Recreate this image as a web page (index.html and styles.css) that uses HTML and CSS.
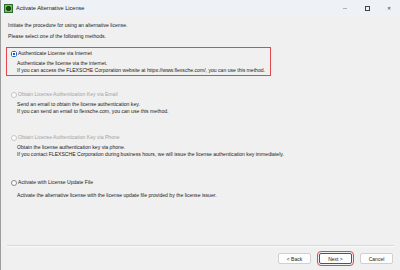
FILE: index.html
```html
<!DOCTYPE html>
<html lang="en">
<head>
  <meta charset="UTF-8" />
  <title>Activate Alternative License</title>
  <link rel="stylesheet" href="styles.css">
</head>
<body>

  <div class="window">
    <!-- Title bar -->
    <div class="titlebar">
      <svg class="app-icon" width="9" height="9" viewBox="0 0 9 9">
        <rect x="0" y="0" width="9" height="9" fill="#2e6b2e"/>
        <rect x="1" y="1" width="7" height="7" fill="#7cc04a"/>
        <rect x="3" y="2" width="3" height="5" fill="#1d4a1d"/>
        <rect x="2" y="3" width="5" height="3" fill="#1d4a1d"/>
      </svg>
      <span class="title">Activate Alternative License</span>
      <div class="win-controls">
        <span class="ctl ctl-min"></span>
        <span class="ctl ctl-max"></span>
        <span class="ctl ctl-close">&#x2715;</span>
      </div>
    </div>

    <div class="content">
      <p class="intro">Initiate the procedure for using an alternative license.</p>
      <p class="intro">Please select one of the following methods.</p>

      <div class="options">
        <div class="option selected">
          <div class="option-head">
            <span class="radio checked"></span>
            <span>Authenticate License via Internet</span>
          </div>
          <div class="option-desc">
            Authenticate the license via the internet.<br>
            If you can access the FLEXSCHE Corporation website at https://www.flexsche.com/, you can use this method.
          </div>
        </div>

        <div class="option">
          <div class="option-head disabled">
            <span class="radio"></span>
            <span>Obtain License Authentication Key via Email</span>
          </div>
          <div class="option-desc">
            Send an email to obtain the license authentication key.<br>
            If you can send an email to flexsche.com, you can use this method.
          </div>
        </div>

        <div class="option">
          <div class="option-head disabled">
            <span class="radio"></span>
            <span>Obtain License Authentication Key via Phone</span>
          </div>
          <div class="option-desc">
            Obtain the license authentication key via phone.<br>
            If you contact FLEXSCHE Corporation during business hours, we will issue the license authentication key immediately.
          </div>
        </div>

        <div class="option">
          <div class="option-head">
            <span class="radio"></span>
            <span>Activate with License Update File</span>
          </div>
          <div class="option-desc">
            Activate the alternative license with the license update file provided by the license issuer.
          </div>
        </div>
      </div>
    </div>

    <div class="footer">
      <div class="separator"></div>
      <div class="buttons">
        <button class="btn">&lt; Back</button>
        <button class="btn btn-default">Next &gt;</button>
        <button class="btn">Cancel</button>
      </div>
    </div>
  </div>

</body>
</html>
```

FILE: styles.css
```css
html, body {
  margin: 0;
  height: 100%;
}

body {
  font-family: "Liberation Sans", Arial, sans-serif;
  font-size: 5.1px;
  color: #1a1a1a;
  background-color: #f0f0f0;
  overflow: hidden;
}

.window {
  width: 400px;
  height: 270px;
  display: flex;
  flex-direction: column;
  background-color: #f0f0f0;
  border-left: 1px solid #9c9c9c;
  box-sizing: border-box;
}

/* Title bar */
.titlebar {
  height: 16px;
  flex-shrink: 0;
  display: flex;
  align-items: center;
  background-color: #eef2f7;
  padding-left: 3px;
}

.app-icon {
  margin-right: 3px;
}

.title {
  font-size: 5.6px;
  color: #222;
}

.win-controls {
  margin-left: auto;
  display: flex;
  align-items: center;
}

.ctl {
  width: 22px;
  height: 16px;
  display: flex;
  align-items: center;
  justify-content: center;
  font-size: 5px;
  color: #333;
}

.ctl-min::before {
  content: "";
  width: 4px;
  height: 1px;
  background-color: #b0b0b0;
}

.ctl-max::before {
  content: "";
  width: 3px;
  height: 3px;
  border: 1px solid #444;
}

/* Content */
.content {
  flex-grow: 1;
  padding: 4px 6px 0 7px;
}

.intro {
  margin: 0;
  line-height: 11px;
}

.options {
  display: flex;
  flex-direction: column;
  margin-top: 5px;
  margin-left: -2px;
}

.option {
  border: 1px solid transparent;
  padding: 2px 4px 1px 4px;
  width: 255px;
  line-height: 7px;
}

.option + .option {
  margin-top: 12px;
}

.option:nth-child(3) {
  margin-top: 14px;
}

.option:nth-child(4) {
  margin-top: 16px;
}

.option.selected {
  border-color: #e0494e;
}

.option-head {
  display: flex;
  align-items: center;
  gap: 1px;
}

.option-head.disabled {
  color: #a3a3a3;
}

.radio {
  width: 6px;
  height: 6px;
  border: 1px solid #8a8a8a;
  border-radius: 50%;
  background-color: #fff;
  box-sizing: border-box;
  flex-shrink: 0;
}

.option-head.disabled .radio {
  border-color: #c4c4c4;
}

.radio.checked {
  border: none;
  background: radial-gradient(circle, #0a5fc7 0 30%, #fff 36% 52%, #0a5fc7 58%);
}

.option-desc {
  margin-top: 3px;
  padding-left: 6px;
  white-space: nowrap;
}

.option:last-child .option-desc {
  margin-top: 6px;
}

/* Footer */
.footer {
  flex-shrink: 0;
  padding: 0 6px 6px 6px;
}

.separator {
  height: 1px;
  background-color: #d9d9d9;
  border-bottom: 1px solid #fbfbfb;
  margin-bottom: 6px;
}

.buttons {
  display: flex;
  justify-content: flex-end;
  gap: 8px;
  padding-right: 1px;
}

.btn {
  width: 33px;
  height: 11px;
  padding: 0;
  font-family: "Liberation Sans", Arial, sans-serif;
  font-size: 5px;
  color: #222;
  background-color: #fdfdfd;
  border: 1px solid #d0d0d0;
  border-radius: 2px;
}

.btn-default {
  border-color: #0a64c8;
  outline: 1px solid #e0494e;
  outline-offset: 1px;
}
```
